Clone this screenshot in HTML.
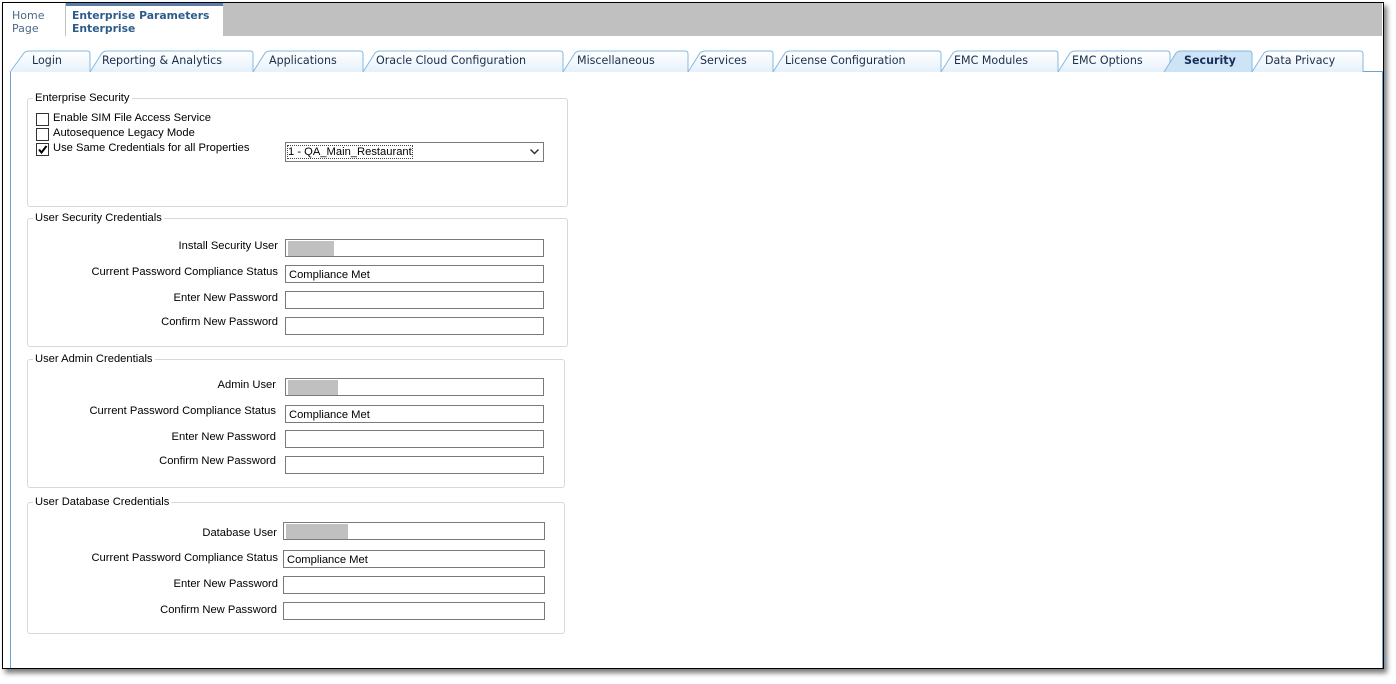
<!DOCTYPE html>
<html><head><meta charset="utf-8"><style>
body{margin:0;width:1396px;height:684px;background:#fff;position:relative;overflow:hidden;font-family:"Liberation Sans",sans-serif;}
.a{position:absolute}
.frame{left:2px;top:2px;width:1380px;height:665px;border:1px solid #000;box-shadow:3px 4px 5px #777;background:#fff}
.tb{font-family:"DejaVu Sans",sans-serif;font-size:11.1px;color:#1a2e4a}
.grp{border:1px solid #d8d8d8;border-radius:3px}
.lg{font-size:11.2px;color:#000;background:#fff;padding:0 2px}
.lab{font-size:11.2px;color:#000;text-align:right;width:260px}
.inp{border:1px solid #7a7a7a;width:259px;height:18px;background:#fff;font-size:11.2px;line-height:18px;box-sizing:border-box;padding-left:3px}
.red{position:absolute;left:2px;top:1px;height:15px;background:#c0c0c0}
.cb{width:11px;height:11px;border:1px solid #333;background:#fff}
.ct{font-size:11.2px}
</style></head><body>
<div class="a frame"></div>
<div class="a" style="left:3px;top:3px;width:1379px;height:33px;background:#c0c0c0"></div>
<div class="a" style="left:3px;top:3px;width:62px;height:33px;background:#fff"></div>
<div class="a" style="left:66px;top:3px;width:157px;height:33px;background:#fff;border-top:3px solid #5a7ea8;box-sizing:border-box"></div>
<div class="a tb" style="left:12px;top:9px;color:#4a6a8a;line-height:13px;font-size:11px">Home<br>Page</div>
<div class="a tb" style="left:72px;top:9px;color:#2d5c8c;font-weight:bold;line-height:13px;font-size:10.8px">Enterprise Parameters<br>Enterprise</div>
<div class="a" style="left:10px;top:71px;width:1371px;height:596px;border-left:1px solid #6aa5d6;border-top:1px solid #6aa5d6;border-right:1px solid #6aa5d6"></div>
<svg class="a" style="left:0;top:0" width="1396" height="80">
<defs><linearGradient id="g" x1="0" y1="0" x2="0" y2="1"><stop offset="0" stop-color="#fff"/><stop offset="1" stop-color="#e6f1fa"/></linearGradient></defs>
<g stroke="#86b8df" fill="url(#g)">
<path d="M10,72 L24,53 Q26,51 29,51 L87,51 Q90,51 90,54 L90,72"/>
<path d="M90,72 L102,53 Q104,51 107,51 L250,51 Q253,51 253,54 L253,72"/>
<path d="M253,72 L265,53 Q267,51 270,51 L360,51 Q363,51 363,54 L363,72"/>
<path d="M363,72 L375,53 Q377,51 380,51 L560,51 Q563,51 563,54 L563,72"/>
<path d="M563,72 L575,53 Q577,51 580,51 L685,51 Q688,51 688,54 L688,72"/>
<path d="M688,72 L700,53 Q702,51 705,51 L770,51 Q773,51 773,54 L773,72"/>
<path d="M773,72 L785,53 Q787,51 790,51 L938,51 Q941,51 941,54 L941,72"/>
<path d="M941,72 L953,53 Q955,51 958,51 L1055,51 Q1058,51 1058,54 L1058,72"/>
<path d="M1058,72 L1070,53 Q1072,51 1075,51 L1167,51 Q1170,51 1170,54 L1170,72"/>
<path d="M1252,72 L1264,53 Q1266,51 1269,51 L1360,51 Q1363,51 1363,54 L1363,72"/>
<path d="M1164,72 L1176,53 Q1178,51 1181,51 L1249,51 Q1252,51 1252,54 L1252,72" fill="#cde4f7"/>
</g></svg>
<div class="a tb" style="left:32px;top:54px">Login</div>
<div class="a tb" style="left:102px;top:54px">Reporting &amp; Analytics</div>
<div class="a tb" style="left:269px;top:54px">Applications</div>
<div class="a tb" style="left:376px;top:54px">Oracle Cloud Configuration</div>
<div class="a tb" style="left:577px;top:54px">Miscellaneous</div>
<div class="a tb" style="left:700px;top:54px">Services</div>
<div class="a tb" style="left:785px;top:54px">License Configuration</div>
<div class="a tb" style="left:954px;top:54px">EMC Modules</div>
<div class="a tb" style="left:1072px;top:54px">EMC Options</div>
<div class="a tb" style="left:1184px;top:54px;font-weight:bold;color:#1a2e5a">Security</div>
<div class="a tb" style="left:1265px;top:54px">Data Privacy</div>

<div class="a grp" style="left:27px;top:98px;width:539px;height:107px"></div>
<div class="a lg" style="left:33px;top:92px">Enterprise Security</div>
<div class="a cb" style="left:36px;top:113px"></div><div class="a ct" style="left:53px;top:112px">Enable SIM File Access Service</div>
<div class="a cb" style="left:36px;top:128px"></div><div class="a ct" style="left:53px;top:127px">Autosequence Legacy Mode</div>
<div class="a cb" style="left:36px;top:143px"><svg width="11" height="11" style="display:block"><path d="M2,5.5 L4.5,8.5 L9.5,2" stroke="#000" stroke-width="2" fill="none"/></svg></div><div class="a ct" style="left:53px;top:142px">Use Same Credentials for all Properties</div>
<div class="a inp" style="left:285px;top:142px;height:20px;line-height:19px;padding-left:2px"><span style="outline:1px dotted #444">1 - QA_Main_Restaurant</span><svg style="position:absolute;right:4px;top:6px" width="9" height="6"><path d="M0.5,0.5 L4.5,4.5 L8.5,0.5" stroke="#333" stroke-width="1.5" fill="none"/></svg></div>

<div class="a grp" style="left:27px;top:218px;width:539px;height:127px"></div>
<div class="a lg" style="left:33px;top:212px">User Security Credentials</div>
<div class="a lab" style="left:18px;top:240px">Install Security User</div><div class="a inp" style="left:285px;top:239px"><div class="red" style="width:46px"></div></div>
<div class="a lab" style="left:18px;top:266px">Current Password Compliance Status</div><div class="a inp" style="left:285px;top:265px">Compliance Met</div>
<div class="a lab" style="left:18px;top:292px">Enter New Password</div><div class="a inp" style="left:285px;top:291px"></div>
<div class="a lab" style="left:18px;top:316px">Confirm New Password</div><div class="a inp" style="left:285px;top:317px"></div>

<div class="a grp" style="left:27px;top:359px;width:536px;height:127px"></div>
<div class="a lg" style="left:33px;top:353px">User Admin Credentials</div>
<div class="a lab" style="left:16px;top:379px">Admin User</div><div class="a inp" style="left:285px;top:378px"><div class="red" style="width:50px"></div></div>
<div class="a lab" style="left:16px;top:405px">Current Password Compliance Status</div><div class="a inp" style="left:285px;top:405px">Compliance Met</div>
<div class="a lab" style="left:16px;top:431px">Enter New Password</div><div class="a inp" style="left:285px;top:430px"></div>
<div class="a lab" style="left:16px;top:455px">Confirm New Password</div><div class="a inp" style="left:285px;top:456px"></div>

<div class="a grp" style="left:27px;top:502px;width:536px;height:130px"></div>
<div class="a lg" style="left:33px;top:496px">User Database Credentials</div>
<div class="a lab" style="left:17px;top:527px">Database User</div><div class="a inp" style="left:283px;top:522px;width:262px"><div class="red" style="width:62px"></div></div>
<div class="a lab" style="left:18px;top:552px">Current Password Compliance Status</div><div class="a inp" style="left:283px;top:550px;width:262px">Compliance Met</div>
<div class="a lab" style="left:18px;top:578px">Enter New  Password</div><div class="a inp" style="left:283px;top:576px;width:262px"></div>
<div class="a lab" style="left:17px;top:604px">Confirm New Password</div><div class="a inp" style="left:283px;top:602px;width:262px"></div>
</body></html>
